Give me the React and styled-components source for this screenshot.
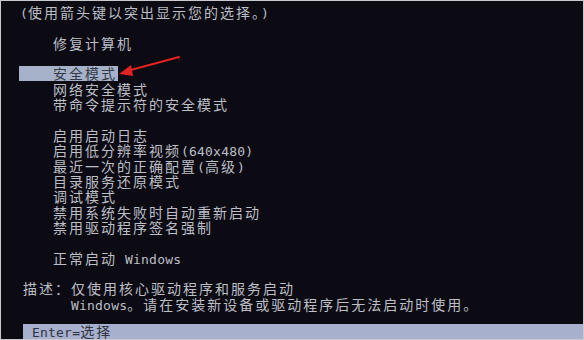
import styled, { createGlobalStyle } from 'styled-components';

const GlobalStyle = createGlobalStyle`
    html, body {
        margin: 0;
        padding: 0;
        background: #0c0b13;
    }
`

const Screen = styled.div`
    position: relative;
    box-sizing: border-box;
    width: 584px;
    height: 340px;
    overflow: hidden;
    background: #0c0b13;
    border: 1px solid #c9c9cf;
    padding-top: 4px;
    color: #bcbfc6;
`

const Line = styled.div`
    height: 15.36px;
    line-height: 15px;
    padding-left: ${props => props.$indent || 0}px;
    white-space: pre;
`

const Selected = styled.div`
    display: inline-block;
    height: 15px;
    line-height: 15px;
    margin-left: 18px;
    padding-left: 34px;
    padding-right: 1px;
    background: #a6b2c9;
    color: #353a47;
`

const Cjk = styled.span`
    font-family: "Noto Sans CJK SC", sans-serif;
    font-size: 14px;
    line-height: 15px;
    letter-spacing: 2px;
`

const Latin = styled.span`
    font-family: "DejaVu Sans Mono", monospace;
    font-size: 13px;
    line-height: 15px;
    letter-spacing: 0.2px;
`

const Description = styled.div`
    padding-left: 22px;
`

const FooterBar = styled.div`
    margin-top: 12px;
    margin-left: 22px;
    height: 16px;
    line-height: 15px;
    padding-left: 9px;
    background: #a7b0cc;
    color: #30343f;
`

const Arrow = styled.svg`
    position: absolute;
    left: 112px;
    top: 50px;
`

// split text into console cells: ascii runs are single width, the rest double width
function Con({ text }) {
  const runs = text.match(/[\x00-\x7f]+|[^\x00-\x7f]+/g) || [];
  return runs.map((run, i) =>
    /^[\x00-\x7f]/.test(run)
      ? <Latin key={i}>{run}</Latin>
      : <Cjk key={i}>{run}</Cjk>
  );
}

const groupOne = ['网络安全模式', '带命令提示符的安全模式'];

const groupTwo = [
  '启用启动日志',
  '启用低分辨率视频(640x480)',
  '最近一次的正确配置(高级)',
  '目录服务还原模式',
  '调试模式',
  '禁用系统失败时自动重新启动',
  '禁用驱动程序签名强制',
];

function App() {
  return (
    <>
      <GlobalStyle />
      <Screen>
        <Line $indent={19}><Con text="(使用箭头键以突出显示您的选择。)" /></Line>
        <Line />
        <Line $indent={52}><Con text="修复计算机" /></Line>
        <Line />
        <Line>
          <Selected><Con text="安全模式" /></Selected>
        </Line>
        {groupOne.map(item => (
          <Line key={item} $indent={52}><Con text={item} /></Line>
        ))}
        <Line />
        {groupTwo.map(item => (
          <Line key={item} $indent={52}><Con text={item} /></Line>
        ))}
        <Line />
        <Line $indent={52}><Con text="正常启动 Windows" /></Line>
        <Line />
        <Description>
          <Line><Con text="描述：仅使用核心驱动程序和服务启动" /></Line>
          <Line $indent={48}><Con text="Windows。请在安装新设备或驱动程序后无法启动时使用。" /></Line>
        </Description>
        <FooterBar><Con text="Enter=选择" /></FooterBar>
        <Arrow width="70" height="30" viewBox="0 0 70 30">
          <path d="M66 6 L14 20" stroke="#e3231f" strokeWidth="2" strokeLinecap="round" />
          <path d="M6 23 L18 14 L20 25 Z" fill="#e3231f" />
        </Arrow>
      </Screen>
    </>
  );
}

export default App;
